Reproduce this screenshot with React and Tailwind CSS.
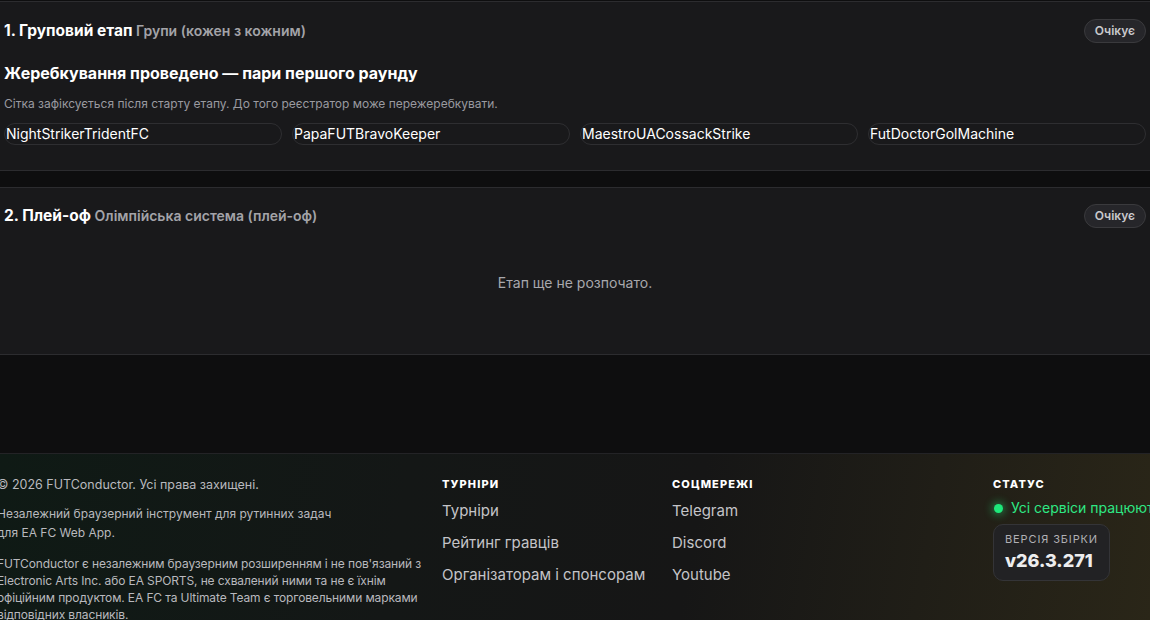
const players = ["NightStrikerTridentFC", "PapaFUTBravoKeeper", "MaestroUACossackStrike", "FutDoctorGolMachine"];

const Badge = () => (
  <span className="rounded-full border border-[#3a3a3d] bg-[#26262a] px-[10px] py-[2px] text-[12px] font-semibold text-[#c9c9cc]">
    Очікує
  </span>
);

const StageHeader = ({ num, title, sub }) => (
  <div className="flex items-center justify-between h-[24px]">
    <p className="text-[15.5px] font-bold text-white">
      {num}. {title} <span className="text-[14px] font-semibold text-[#a3a3a8]">{sub}</span>
    </p>
    <Badge />
  </div>
);

export default function App() {
  return (
    <main className="min-h-screen bg-[#0e0e0f] overflow-hidden" style={{ fontFamily: "Inter, 'Noto Sans', sans-serif" }}>
      <div className="h-[1px]" />
      <section className="border-y border-[#2c2c2f] bg-[#19191b] px-[4px] pt-[17px] pb-[25px]">
        <StageHeader num="1" title="Груповий етап" sub="Групи (кожен з кожним)" />
        <h3 className="mt-[18px] text-[16px] font-bold text-white leading-[24px]">Жеребкування проведено — пари першого раунду</h3>
        <p className="mt-[10px] text-[12px] text-[#9a9aa0] leading-[18px]">
          Сітка зафіксується після старту етапу. До того реєстратор може пережеребкувати.
        </p>
        <div className="mt-[10px] grid grid-cols-4 gap-[10px]">
          {players.map((p) => (
            <div key={p} className="h-[22px] rounded-full border border-[#2e2e31] px-[1px] text-[14px] leading-[20px] text-white">
              {p}
            </div>
          ))}
        </div>
      </section>
      <div className="h-[16px]" />
      <section className="border-y border-[#2c2c2f] bg-[#19191b] px-[4px] pt-[16px] h-[168px]">
        <StageHeader num="2" title="Плей-оф" sub="Олімпійська система (плей-оф)" />
        <p className="mt-[44px] text-center text-[14px] text-[#a8a8ad]">Етап ще не розпочато.</p>
      </section>
      <div className="h-[98px]" />
      <footer className="border-t border-[#232326] bg-[linear-gradient(100deg,#0f1a15_0%,#141716_35%,#161616_60%,#2a2618_100%)] h-[170px]">
        <div className="flex pt-[21px] -ml-[3px]">
          <div className="w-[445px] shrink-0 pr-[20px] text-[#b9b9be]">
            <p className="text-[12.5px] leading-[20px]">© 2026 FUTConductor. Усі права захищені.</p>
            <p className="mt-[9px] text-[12px] leading-[19px]">Незалежний браузерний інструмент для рутинних задач<br />для EA FC Web App.</p>
            <p className="mt-[13px] text-[12px] leading-[17px] tracking-[-0.01em]">
              FUTConductor є незалежним браузерним розширенням і не пов'язаний з Electronic Arts Inc. або EA SPORTS, не схвалений ними та не є їхнім офіційним продуктом. EA FC та Ultimate Team є торговельними марками відповідних власників.
            </p>
          </div>
          <div className="w-[230px] shrink-0">
            <p className="text-[11px] font-extrabold tracking-[0.1em] text-white leading-[18px]">ТУРНІРИ</p>
            <ul className="mt-[7px] flex flex-col gap-[10px] text-[15px] text-[#c4c4c8] leading-[22px]">
              <li>Турніри</li>
              <li>Рейтинг гравців</li>
              <li>Організаторам і спонсорам</li>
            </ul>
          </div>
          <div className="w-[321px] shrink-0">
            <p className="text-[11px] font-extrabold tracking-[0.1em] text-white leading-[18px]">СОЦМЕРЕЖІ</p>
            <ul className="mt-[7px] flex flex-col gap-[10px] text-[15px] text-[#c4c4c8] leading-[22px]">
              <li>Telegram</li>
              <li>Discord</li>
              <li>Youtube</li>
            </ul>
          </div>
          <div className="shrink-0 whitespace-nowrap">
            <p className="text-[11px] font-extrabold tracking-[0.1em] text-white leading-[18px]">СТАТУС</p>
            <div className="mt-[5px] flex items-center gap-[8px] pl-[1px]">
              <span className="h-[9px] w-[9px] rounded-full bg-[#1ee87a] shadow-[0_0_8px_2px_rgba(30,232,122,0.45)]" />
              <span className="text-[14px] text-[#2ee884] leading-[20px]">Усі сервіси працюють</span>
            </div>
            <div className="mt-[6px] w-[117px] rounded-[10px] border border-[#343437] bg-[#222224] px-[11px] pt-[7px] pb-[8px]">
              <p className="text-[11px] tracking-[0.08em] text-[#b0b0b4] leading-[14px]">ВЕРСІЯ ЗБІРКИ</p>
              <p className="mt-[4px] text-[18px] font-extrabold text-[#ededee] leading-[22px]">v26.3.271</p>
            </div>
          </div>
        </div>
      </footer>
    </main>
  );
}
